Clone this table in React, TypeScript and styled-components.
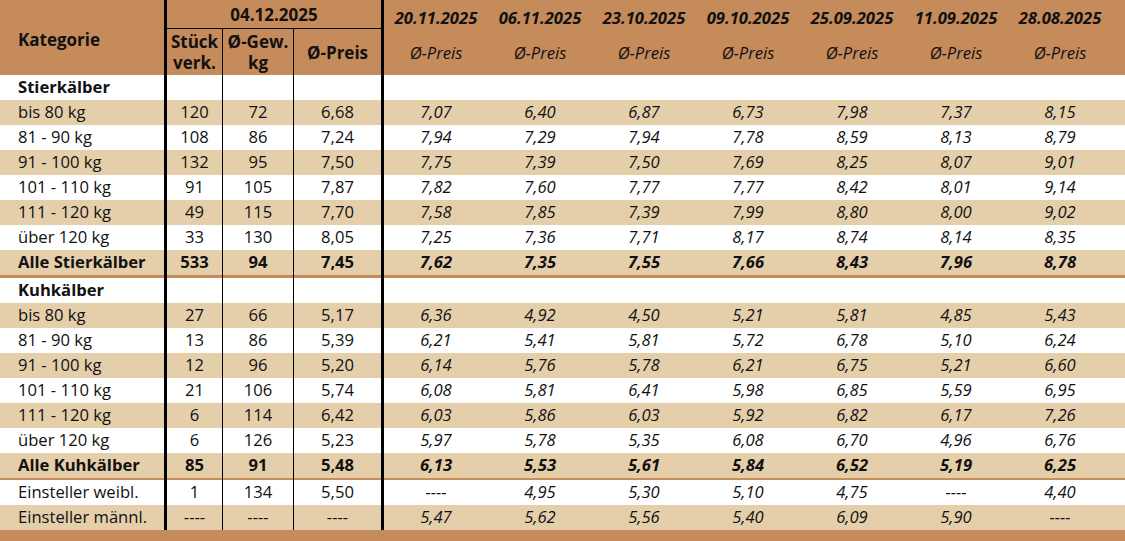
import React from "react";
import styled, { createGlobalStyle, css } from "styled-components";

const BROWN = "#C58B5B";
const BEIGE = "#E5CFAB";
const WHITE = "#FFFFFF";
const INK = "#111111";
const COLS = "167px 56px 71px 90px repeat(7, 104px) 13px";

const Global = createGlobalStyle`
  html, body { margin: 0; padding: 0; background: #fff; }
  body { font-family: "Open Sans", "DejaVu Sans", sans-serif; color: ${INK}; }
  * { box-sizing: border-box; }
`;

const Page = styled.div`
  width: 1125px;
  height: 541px;
  overflow: hidden;
  display: flex;
  flex-direction: column;
  font-size: 16.6px;
`;

const Header = styled.div`
  display: grid;
  grid-template-columns: ${COLS};
  grid-template-rows: 29px 46px;
  background: ${BROWN};
  font-weight: 700;
`;

type Line = "thick" | "thin" | "none";

const lineCss = (l?: Line) =>
  l === "thick"
    ? css`border-right: 3px solid #000;`
    : l === "thin"
    ? css`border-right: 1px solid #000;`
    : css``;

const HCell = styled.div<{ $col: string; $row: string; $line?: Line; $under?: boolean; $italic?: boolean; $weight?: number; $left?: boolean; $pt?: number; $size?: number }>`
  grid-column: ${(p) => p.$col};
  grid-row: ${(p) => p.$row};
  display: flex;
  align-items: center;
  justify-content: ${(p) => (p.$left ? "flex-start" : "center")};
  text-align: center;
  line-height: 21px;
  font-size: ${(p) => p.$size ?? 16.6}px;
  padding-left: ${(p) => (p.$left ? "18px" : "0")};
  padding-top: ${(p) => p.$pt ?? 0}px;
  font-style: ${(p) => (p.$italic ? "italic" : "normal")};
  font-weight: ${(p) => p.$weight ?? 700};
  ${(p) => lineCss(p.$line)}
  ${(p) => (p.$under ? css`border-bottom: 1px solid #000;` : css``)}
  white-space: nowrap;
`;

const Row = styled.div<{ $bg: string; $h: number }>`
  display: grid;
  grid-template-columns: ${COLS};
  height: ${(p) => p.$h}px;
  background: ${(p) => p.$bg};
`;

const Cell = styled.div<{ $line?: Line; $left?: boolean; $bold?: boolean; $italic?: boolean }>`
  display: flex;
  align-items: center;
  justify-content: ${(p) => (p.$left ? "flex-start" : "center")};
  padding-left: ${(p) => (p.$left ? "18px" : "0")};
  font-weight: ${(p) => (p.$bold ? 700 : 400)};
  font-style: ${(p) => (p.$italic ? "italic" : "normal")};
  white-space: nowrap;
  line-height: 1;
  ${(p) => lineCss(p.$line)}
`;

const Footer = styled.div`
  flex: 1;
  background: ${BROWN};
`;

const dates = ["20.11.2025", "06.11.2025", "23.10.2025", "09.10.2025", "25.09.2025", "11.09.2025", "28.08.2025"];

type DataRow = { label: string; a: string; b: string; c: string; hist: string[] };
type Item =
  | { kind: "section"; label: string }
  | { kind: "data"; row: DataRow; bg: string; total?: boolean }
  | { kind: "sep"; h: number };

const r = (label: string, a: string, b: string, c: string, h: string): DataRow => ({
  label,
  a,
  b,
  c,
  hist: h.split(" "),
});

const items: Item[] = [
  { kind: "section", label: "Stierkälber" },
  { kind: "data", bg: BEIGE, row: r("bis 80 kg", "120", "72", "6,68", "7,07 6,40 6,87 6,73 7,98 7,37 8,15") },
  { kind: "data", bg: WHITE, row: r("81 - 90 kg", "108", "86", "7,24", "7,94 7,29 7,94 7,78 8,59 8,13 8,79") },
  { kind: "data", bg: BEIGE, row: r("91 - 100 kg", "132", "95", "7,50", "7,75 7,39 7,50 7,69 8,25 8,07 9,01") },
  { kind: "data", bg: WHITE, row: r("101 - 110 kg", "91", "105", "7,87", "7,82 7,60 7,77 7,77 8,42 8,01 9,14") },
  { kind: "data", bg: BEIGE, row: r("111 - 120 kg", "49", "115", "7,70", "7,58 7,85 7,39 7,99 8,80 8,00 9,02") },
  { kind: "data", bg: WHITE, row: r("über 120 kg", "33", "130", "8,05", "7,25 7,36 7,71 8,17 8,74 8,14 8,35") },
  { kind: "data", bg: BEIGE, total: true, row: r("Alle Stierkälber", "533", "94", "7,45", "7,62 7,35 7,55 7,66 8,43 7,96 8,78") },
  { kind: "sep", h: 3 },
  { kind: "section", label: "Kuhkälber" },
  { kind: "data", bg: BEIGE, row: r("bis 80 kg", "27", "66", "5,17", "6,36 4,92 4,50 5,21 5,81 4,85 5,43") },
  { kind: "data", bg: WHITE, row: r("81 - 90 kg", "13", "86", "5,39", "6,21 5,41 5,81 5,72 6,78 5,10 6,24") },
  { kind: "data", bg: BEIGE, row: r("91 - 100 kg", "12", "96", "5,20", "6,14 5,76 5,78 6,21 6,75 5,21 6,60") },
  { kind: "data", bg: WHITE, row: r("101 - 110 kg", "21", "106", "5,74", "6,08 5,81 6,41 5,98 6,85 5,59 6,95") },
  { kind: "data", bg: BEIGE, row: r("111 - 120 kg", "6", "114", "6,42", "6,03 5,86 6,03 5,92 6,82 6,17 7,26") },
  { kind: "data", bg: WHITE, row: r("über 120 kg", "6", "126", "5,23", "5,97 5,78 5,35 6,08 6,70 4,96 6,76") },
  { kind: "data", bg: BEIGE, total: true, row: r("Alle Kuhkälber", "85", "91", "5,48", "6,13 5,53 5,61 5,84 6,52 5,19 6,25") },
  { kind: "sep", h: 2 },
  { kind: "data", bg: WHITE, row: r("Einsteller weibl.", "1", "134", "5,50", "---- 4,95 5,30 5,10 4,75 ---- 4,40") },
  { kind: "data", bg: BEIGE, row: r("Einsteller männl.", "----", "----", "----", "5,47 5,62 5,56 5,40 6,09 5,90 ----") },
];

const LeftCells: React.FC<{ label?: string; a?: string; b?: string; c?: string; bold?: boolean }> = ({ label, a, b, c, bold }) => (
  <>
    <Cell $line="thick" $left $bold={bold}>{label}</Cell>
    <Cell $line="thin" $bold={bold}>{a}</Cell>
    <Cell $line="thin" $bold={bold}>{b}</Cell>
    <Cell $line="thick" $bold={bold}>{c}</Cell>
  </>
);

export default function App() {
  return (
    <Page>
      <Global />
      <Header>
        <HCell $col="1" $row="1 / 3" $line="thick" $left $pt={4} $size={17}>Kategorie</HCell>
        <HCell $col="2 / 5" $row="1" $line="thick" $under $size={17}>04.12.2025</HCell>
        <HCell $col="2" $row="2" $line="thin" $size={17}>Stück<br />verk.</HCell>
        <HCell $col="3" $row="2" $line="thin" $size={17}>Ø-Gew.<br />kg</HCell>
        <HCell $col="4" $row="2" $line="thick" $size={17}>Ø-Preis</HCell>
        {dates.map((d, i) => (
          <HCell key={d} $col={`${5 + i}`} $row="1" $italic $pt={5}>{d}</HCell>
        ))}
        {dates.map((d, i) => (
          <HCell key={d + "p"} $col={`${5 + i}`} $row="2" $italic $weight={400}>Ø-Preis</HCell>
        ))}
      </Header>
      {items.map((it, idx) => {
        if (it.kind === "section") {
          return (
            <Row key={idx} $bg={WHITE} $h={25}>
              <LeftCells label={it.label} bold />
            </Row>
          );
        }
        if (it.kind === "sep") {
          return (
            <Row key={idx} $bg={BROWN} $h={it.h}>
              <LeftCells />
            </Row>
          );
        }
        const d = it.row;
        return (
          <Row key={idx} $bg={it.bg} $h={25}>
            <LeftCells label={d.label} a={d.a} b={d.b} c={d.c} bold={it.total} />
            {d.hist.map((v, j) => (
              <Cell key={j} $italic $bold={it.total}>{v}</Cell>
            ))}
            <Cell />
          </Row>
        );
      })}
      <Footer />
    </Page>
  );
}
